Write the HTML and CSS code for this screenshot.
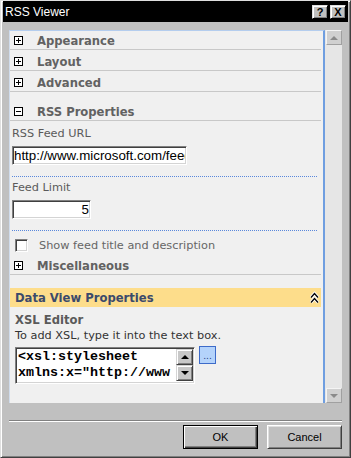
FILE: index.html
```html
<!DOCTYPE html>
<html lang="en">
<head>
  <meta charset="UTF-8" />
  <title>RSS Viewer</title>
  <link rel="stylesheet" href="styles.css">
</head>
<body>
  <div class="window">
    <div class="titlebar">
      <span class="title">RSS Viewer</span>
      <span class="caption-btns">
        <span class="cap-btn">?</span>
        <span class="cap-btn">X</span>
      </span>
    </div>

    <div class="client">
      <div class="pane">
        <div class="pane-main">
          <div class="sec-row first">
            <svg class="toggle" width="9" height="9"><rect x=".5" y=".5" width="8" height="8" fill="#fff" stroke="#000"/><path d="M2 4.5h5M4.5 2v5" stroke="#000"/></svg>
            Appearance
          </div>
          <div class="sec-row">
            <svg class="toggle" width="9" height="9"><rect x=".5" y=".5" width="8" height="8" fill="#fff" stroke="#000"/><path d="M2 4.5h5M4.5 2v5" stroke="#000"/></svg>
            Layout
          </div>
          <div class="sec-row">
            <svg class="toggle" width="9" height="9"><rect x=".5" y=".5" width="8" height="8" fill="#fff" stroke="#000"/><path d="M2 4.5h5M4.5 2v5" stroke="#000"/></svg>
            Advanced
          </div>
          <div class="sec-row open">
            <svg class="toggle" width="9" height="9"><rect x=".5" y=".5" width="8" height="8" fill="#fff" stroke="#000"/><path d="M2 4.5h5" stroke="#000"/></svg>
            RSS Properties
          </div>

          <div class="prop-group">
            <label class="prop-label">RSS Feed URL</label>
            <input class="field url" type="text" value="http://www.microsoft.com/feeds/msdn/en-us/rss.xml" />
            <div class="dotted"></div>

            <label class="prop-label">Feed Limit</label>
            <input class="field limit" type="text" value="5" />
            <div class="dotted"></div>

            <div class="check-row">
              <span class="check"></span>
              Show feed title and description
            </div>
          </div>

          <div class="sec-row">
            <svg class="toggle" width="9" height="9"><rect x=".5" y=".5" width="8" height="8" fill="#fff" stroke="#000"/><path d="M2 4.5h5M4.5 2v5" stroke="#000"/></svg>
            Miscellaneous
          </div>

          <div class="band">
            <span>Data View Properties</span>
            <svg class="chevrons" width="9" height="13" viewBox="0 0 9 13">
              <path d="M1 6.5l3.5-4 3.5 4M1 11.5l3.5-4 3.5 4" fill="none" stroke="#fff" stroke-width="3"/>
              <path d="M1 6.5l3.5-4 3.5 4M1 11.5l3.5-4 3.5 4" fill="none" stroke="#000" stroke-width="1.3"/>
            </svg>
          </div>

          <div class="xsl">
            <div class="xsl-title">XSL Editor</div>
            <div class="xsl-hint">To add XSL, type it into the text box.</div>
            <div class="xsl-row">
              <div class="xsl-box">
                <div class="xsl-text">&lt;xsl:stylesheet<br>xmlns:x="http://www</div>
                <div class="xsl-scroll">
                  <span class="xs-btn"><span class="tri up"></span></span>
                  <span class="xs-btn"><span class="tri down"></span></span>
                </div>
              </div>
              <span class="more-btn">...</span>
            </div>
          </div>
        </div>

        <div class="vscroll">
          <span class="sb-btn"><span class="tri up gray"></span></span>
          <span class="sb-btn"><span class="tri down gray"></span></span>
        </div>
      </div>

      <div class="sep"></div>

      <div class="buttons">
        <button class="btn default">OK</button>
        <button class="btn">Cancel</button>
      </div>
    </div>
  </div>
</body>
</html>
```

FILE: styles.css
```css
body {
  margin: 0;
  font-family: "DejaVu Sans", Verdana, sans-serif;
}
.window {
  width: 351px;
  height: 458px;
  box-sizing: border-box;
  background: #c0c0c0;
  border: 1px solid;
  border-color: #dfdfdf #404040 #404040 #dfdfdf;
  box-shadow: inset 1px 1px 0 #fff, inset -1px -1px 0 #808080;
  padding: 0 2px 2px;
}
.titlebar {
  height: 21px;
  background: #000;
  color: #fff;
  display: flex;
  align-items: center;
  justify-content: space-between;
  padding: 0 2px;
  font: 12px "Liberation Sans", Arial, sans-serif;
}
.caption-btns {
  display: flex;
  gap: 2px;
}
.cap-btn {
  width: 16px;
  height: 14px;
  box-sizing: border-box;
  background: #c0c0c0;
  border: 1px solid;
  border-color: #dfdfdf #000 #000 #dfdfdf;
  box-shadow: inset 1px 1px 0 #fff, inset -1px -1px 0 #808080;
  color: #000;
  font: bold 11px "Liberation Sans", Arial, sans-serif;
  display: flex;
  align-items: center;
  justify-content: center;
}
.client {
  padding: 8px 6px 0;
}
.pane {
  display: flex;
  height: 373px;
}
.pane-main {
  flex: 1;
  background: #f0f0f0;
  border-top: 1px solid #b4cdee;
  border-left: 1px solid #d0dcec;
  border-right: 2px solid #6f9ee0;
  padding-right: 2px;
  overflow: hidden;
}
.sec-row {
  height: 21px;
  box-sizing: border-box;
  padding-top: 4px;
  border-bottom: 1px solid #c8c8c8;
  display: flex;
  align-items: flex-start;
  font-weight: bold;
  font-size: 11.6px;
  line-height: 16px;
  color: #626262;
}
.sec-row.first {
  margin-top: -2px;
}
.sec-row.open {
  margin-top: 8px;
}
.toggle {
  flex: none;
  margin: 3px 14px 0 4px;
}
.prop-group {
  padding: 2px 0 0 2px;
}
.prop-label {
  display: block;
  margin-top: 3px;
  font-size: 11.3px;
  line-height: 16px;
  color: #5a5a5a;
}
.field {
  display: block;
  height: 19px;
  box-sizing: border-box;
  margin: 4px 0 0;
  padding: 0 1px;
  border: 1px solid;
  border-color: #808080 #fff #fff #808080;
  box-shadow: inset 1px 1px 0 #404040, inset -1px -1px 0 #d4d4d4;
  background: #fff;
  color: #000;
  font: 13.33px "Liberation Sans", Arial, sans-serif;
  outline: none;
}
.url {
  width: 175px;
}
.limit {
  width: 79px;
  text-align: right;
}
.dotted {
  margin: 11px 4px 0 0;
  border-top: 1px dotted #5a88dc;
}
.check-row {
  display: flex;
  align-items: flex-start;
  margin-top: 7px;
  font-size: 11.3px;
  line-height: 16px;
  color: #666;
}
.check {
  width: 13px;
  height: 13px;
  box-sizing: border-box;
  margin: 1px 11px 0 3px;
  border: 1px solid;
  border-color: #808080 #fff #fff #808080;
  box-shadow: inset 1px 1px 0 #404040, inset -1px -1px 0 #d4d4d4;
  background: #fff;
}
.band {
  margin-top: 13px;
  height: 19px;
  padding: 0 2px 0 5px;
  background: #fddd8b;
  display: flex;
  align-items: center;
  justify-content: space-between;
  font-weight: bold;
  font-size: 11.6px;
  color: #3b4a6b;
}
.xsl {
  padding-left: 5px;
}
.xsl-title {
  margin-top: 5px;
  font-weight: bold;
  font-size: 11.6px;
  line-height: 16px;
  color: #5a5a5a;
}
.xsl-hint {
  font-size: 11.3px;
  line-height: 16px;
  color: #333;
}
.xsl-row {
  display: flex;
  align-items: flex-start;
  margin-top: 3px;
}
.xsl-box {
  width: 180px;
  height: 37px;
  box-sizing: border-box;
  display: flex;
  border: 1px solid;
  border-color: #808080 #fff #fff #808080;
  box-shadow: inset 1px 1px 0 #404040, inset -1px -1px 0 #d4d4d4;
  background: #fff;
  padding: 1px;
}
.xsl-text {
  flex: 1;
  padding-left: 1px;
  overflow: hidden;
  white-space: nowrap;
  font: bold 13.33px "Liberation Mono", "Courier New", monospace;
  line-height: 16px;
  color: #000;
}
.xsl-scroll {
  width: 17px;
  display: flex;
  flex-direction: column;
}
.xs-btn {
  height: 16px;
  box-sizing: border-box;
  background: #c8c8c8;
  border: 1px solid;
  border-color: #d4d4d4 #404040 #404040 #d4d4d4;
  box-shadow: inset 1px 1px 0 #fff, inset -1px -1px 0 #808080;
  display: flex;
  align-items: center;
  justify-content: center;
}
.tri {
  width: 0;
  height: 0;
  border-left: 4px solid transparent;
  border-right: 4px solid transparent;
}
.tri.up {
  border-bottom: 4px solid #000;
}
.tri.down {
  border-top: 4px solid #000;
}
.tri.up.gray {
  border-bottom-color: #8a8a8a;
}
.tri.down.gray {
  border-top-color: #8a8a8a;
}
.more-btn {
  width: 17px;
  height: 18px;
  box-sizing: border-box;
  margin: -1px 0 0 4px;
  background: #b4d3fb;
  border: 1px solid #3d6bc9;
  color: #1c3c80;
  font-size: 9px;
  line-height: 18px;
  text-align: center;
}
.vscroll {
  width: 17px;
  background: #e6e6e6;
  display: flex;
  flex-direction: column;
  justify-content: space-between;
}
.sb-btn {
  width: 16px;
  height: 15px;
  margin-left: 1px;
  box-sizing: border-box;
  background: #d0d0d0;
  border: 1px solid;
  border-color: #f4f4f4 #a0a0a0 #a0a0a0 #f4f4f4;
  display: flex;
  align-items: center;
  justify-content: center;
}
.sep {
  margin-top: 17px;
  border-top: 1px solid #808080;
  border-bottom: 1px solid #fff;
}
.buttons {
  display: flex;
  justify-content: flex-end;
  gap: 9px;
  margin-top: 3px;
}
.btn {
  width: 75px;
  height: 24px;
  box-sizing: border-box;
  padding: 0;
  background: #c0c0c0;
  border: 1px solid;
  border-color: #fff #404040 #404040 #fff;
  box-shadow: inset 1px 1px 0 #dfdfdf, inset -1px -1px 0 #808080;
  color: #000;
  font: 11px "Liberation Sans", Arial, sans-serif;
}
.btn.default {
  border-color: #000;
  box-shadow: inset 1px 1px 0 #fff, inset -1px -1px 0 #404040, inset -2px -2px 0 #808080;
}
```
